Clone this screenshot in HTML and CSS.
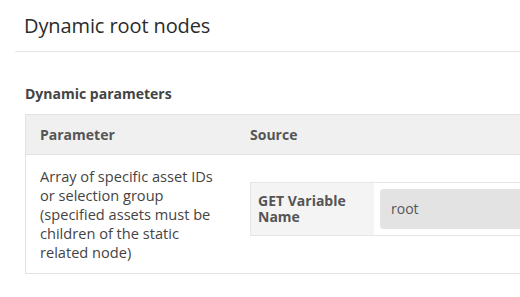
FILE: index.html
```html
<!DOCTYPE html>
<html lang="en">
<head>
  <meta charset="UTF-8" />
  <title>Dynamic root nodes</title>
  <link rel="stylesheet" href="styles.css">
</head>
<body>
  <div class="page-header">
    <h1>Dynamic root nodes</h1>
  </div>

  <div class="section">
    <h2>Dynamic parameters</h2>
    <table class="params">
      <thead>
        <tr>
          <th class="col-param">Parameter</th>
          <th>Source</th>
        </tr>
      </thead>
      <tbody>
        <tr>
          <td class="col-param">Array of specific asset IDs or selection group (specified assets must be children of the static related node)</td>
          <td class="source-cell">
            <table class="source">
              <tr>
                <th>GET Variable Name</th>
                <td><div class="field">root</div></td>
              </tr>
            </table>
          </td>
        </tr>
      </tbody>
    </table>
  </div>
</body>
</html>
```

FILE: styles.css
```css
body {
  margin: 0;
  font-family: 'Open Sans', 'Liberation Sans', sans-serif;
  font-size: 14px;
  color: #444;
  background: #fff;
  overflow: hidden;
}
.page-header {
  margin-left: 15px;
  padding: 10px 0 10px 9px;
  border-bottom: 1px solid #e6e6e6;
}
h1 {
  margin: 0;
  font-size: 20px;
  font-weight: normal;
  line-height: 31px;
  color: #2b2b2b;
  letter-spacing: -0.1px;
}
.section {
  padding: 32px 0 0 25px;
}
h2 {
  margin: 0 0 10px;
  font-size: 14px;
  font-weight: bold;
  line-height: 20px;
  color: #444;
}
table {
  border-collapse: collapse;
}
.params {
  width: 700px;
  table-layout: fixed;
  border: 1px solid #e3e3e3;
}
.params > thead th {
  background: #f0f0f0;
  color: #555;
  text-align: left;
  font-weight: bold;
  padding: 11px 14px;
  line-height: 17px;
  border-bottom: 1px solid #e3e3e3;
}
.params .col-param {
  width: 182px;
}
.params > tbody > tr > td {
  padding: 12px 14px 11px;
  font-size: 14.6px;
  line-height: 19px;
  vertical-align: top;
}
.params > tbody > tr > td.source-cell {
  padding: 27px 0 0 14px;
  font-size: 14px;
}
.source {
  width: 100%;
  border: 1px solid #e6e6e6;
}
.source th {
  width: 109px;
  background: #f4f4f4;
  color: #555;
  text-align: left;
  font-weight: bold;
  line-height: 16px;
  padding: 6px 7px;
}
.source td {
  padding: 6px;
}
.field {
  height: 40px;
  line-height: 40px;
  padding: 0 11px;
  background: #e3e3e3;
  border-radius: 4px;
  color: #555;
}
```
